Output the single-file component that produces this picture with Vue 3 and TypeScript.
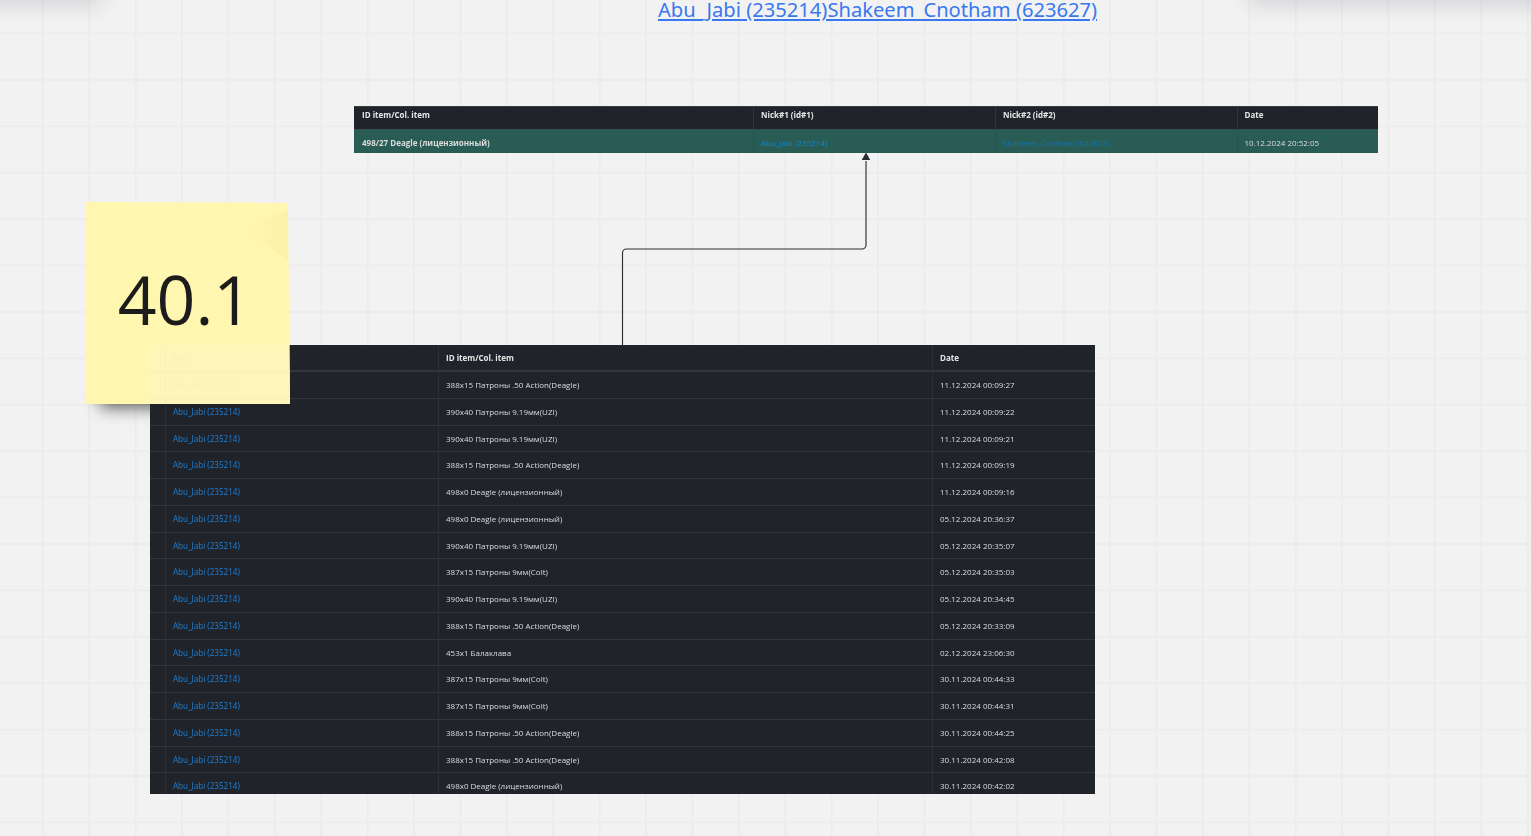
<script setup lang="ts">
interface LogRow {
  item: string
  date: string
}

const rows: LogRow[] = [
  { item: '388x15 Патроны .50 Action(Deagle)', date: '11.12.2024 00:09:27' },
  { item: '390x40 Патроны 9.19мм(UZI)', date: '11.12.2024 00:09:22' },
  { item: '390x40 Патроны 9.19мм(UZI)', date: '11.12.2024 00:09:21' },
  { item: '388x15 Патроны .50 Action(Deagle)', date: '11.12.2024 00:09:19' },
  { item: '498x0 Deagle (лицензионный)', date: '11.12.2024 00:09:16' },
  { item: '498x0 Deagle (лицензионный)', date: '05.12.2024 20:36:37' },
  { item: '390x40 Патроны 9.19мм(UZI)', date: '05.12.2024 20:35:07' },
  { item: '387x15 Патроны 9мм(Colt)', date: '05.12.2024 20:35:03' },
  { item: '390x40 Патроны 9.19мм(UZI)', date: '05.12.2024 20:34:45' },
  { item: '388x15 Патроны .50 Action(Deagle)', date: '05.12.2024 20:33:09' },
  { item: '453x1 Балаклава', date: '02.12.2024 23:06:30' },
  { item: '387x15 Патроны 9мм(Colt)', date: '30.11.2024 00:44:33' },
  { item: '387x15 Патроны 9мм(Colt)', date: '30.11.2024 00:44:31' },
  { item: '388x15 Патроны .50 Action(Deagle)', date: '30.11.2024 00:44:25' },
  { item: '388x15 Патроны .50 Action(Deagle)', date: '30.11.2024 00:42:08' },
  { item: '498x0 Deagle (лицензионный)', date: '30.11.2024 00:42:02' }
]
</script>

<template>
  <main class="canvas">
    <div class="edge-shadow edge-left"></div>
    <div class="edge-shadow edge-right"></div>

    <a class="title-link">Abu_Jabi (235214)Shakeem_Cnotham (623627)</a>

    <section class="shot shot-top">
      <div class="top-row top-head">
        <div class="cell">ID item/Col. item</div>
        <div class="cell">Nick#1 (id#1)</div>
        <div class="cell">Nick#2 (id#2)</div>
        <div class="cell">Date</div>
      </div>
      <div class="top-row top-body">
        <div class="cell strong">498/27 Deagle (лицензионный)</div>
        <div class="cell link">Abu_Jabi (235214)</div>
        <div class="cell link dim">Shakeem_Cnotham (623627)</div>
        <div class="cell">10.12.2024 20:52:05</div>
      </div>
    </section>

    <div class="sticky-shadow"></div>

    <section class="shot shot-bottom">
      <div class="log-row log-head">
        <div class="cell">Nick</div>
        <div class="cell">ID item/Col. item</div>
        <div class="cell">Date</div>
      </div>
      <div v-for="(row, i) in rows" :key="i" class="log-row">
        <div class="cell link">Abu_Jabi (235214)</div>
        <div class="cell">{{ row.item }}</div>
        <div class="cell">{{ row.date }}</div>
      </div>
    </section>

    <svg class="connector" width="260" height="194" viewBox="0 0 260 194" fill="none">
      <path d="M12.5 193V101a4 4 0 0 1 4-4H252a4 4 0 0 0 4-4V9" stroke="#2f2f33" stroke-width="1.15" />
      <path d="M256 0.5l4.3 7.5h-8.6z" fill="#2b2b30" />
    </svg>

    <div class="sticky">
      <div class="fold"></div>
      <div class="overlap">
        <span class="ghost ghost-head">Nick</span>
        <span class="ghost ghost-row">Abu_Jabi (235214)</span>
      </div>
      <span class="sticky-text">40.1</span>
    </div>
  </main>
</template>

<style>
html,
body {
  margin: 0;
  background: #f2f2f2;
}
</style>

<style scoped>
.canvas {
  position: relative;
  width: 1531px;
  height: 836px;
  overflow: hidden;
  background-color: #f2f2f2;
  background-image:
    linear-gradient(to right, #ececec 1.5px, transparent 1.5px),
    linear-gradient(to bottom, #ececec 1.5px, transparent 1.5px);
  background-size: 46.42px 46.42px;
  background-position: 41.8px 32.5px;
  font-family: "Open Sans", "Noto Sans", sans-serif;
}

.edge-shadow {
  position: absolute;
  top: -30px;
  height: 30px;
  background: #fff;
  box-shadow: 0 4px 22px rgba(40, 40, 70, 0.16);
}
.edge-left {
  left: -40px;
  width: 140px;
}
.edge-right {
  left: 1250px;
  width: 320px;
}

.title-link {
  position: absolute;
  left: 658px;
  top: -1px;
  font-family: "Noto Sans", "Open Sans", sans-serif;
  font-size: 20.15px;
  line-height: 20px;
  color: #3a78ee;
  text-decoration: underline;
  white-space: nowrap;
}

.shot {
  position: absolute;
  overflow: hidden;
  background: #21232b;
  color: #dcdcdc;
  font-size: 8px;
  filter: blur(0.35px);
}
.shot-top {
  left: 354px;
  top: 106px;
  width: 1024px;
  height: 47px;
}
.shot-bottom {
  left: 150px;
  top: 345px;
  width: 945px;
  height: 449px;
}

.top-row {
  display: grid;
  grid-template-columns: 399px 242px 241.5px 141.5px;
  box-sizing: border-box;
}
.top-head {
  height: 23px;
  font-weight: 700;
  color: #e6e6e6;
  border-top: 1px solid #3a3c42;
}
.top-body {
  height: 24px;
  background: #2a5c56;
  border-top: 1px solid #35504e;
}
.top-row .cell {
  display: flex;
  align-items: center;
  padding-left: 7px;
  border-left: 1px solid #31343b;
  white-space: nowrap;
}
.top-row .cell:first-child {
  padding-left: 8px;
  border-left: 0;
}
.top-head .cell {
  align-items: flex-start;
  padding-top: 2px;
}
.top-body .cell {
  padding-top: 2px;
  border-left-color: #2f4f4d;
}
.strong {
  font-weight: 700;
}

.log-row {
  display: grid;
  grid-template-columns: 288px 494px 163px;
  height: 26.75px;
  border-bottom: 1px solid #33353c;
  box-sizing: border-box;
}
.log-row .cell {
  display: flex;
  align-items: center;
  padding-left: 7px;
  padding-bottom: 0.5px;
  border-left: 1px solid #2d2f36;
  white-space: nowrap;
  box-sizing: border-box;
}
.log-row .cell:first-child {
  margin-left: 15px;
  padding-left: 7px;
  font-size: 8.1px;
}
.log-head {
  height: 27px;
  border-bottom-width: 2px;
  font-weight: 700;
  color: #e6e6e6;
}

.link {
  color: #1f80d4;
}
.top-body .link {
  color: #1085cf;
}
.top-body .dim {
  color: #1075b2;
}

.connector {
  position: absolute;
  left: 610px;
  top: 152px;
}

.sticky-shadow {
  position: absolute;
  left: 100px;
  top: 386px;
  width: 175px;
  height: 22px;
  background: rgba(0, 0, 0, 0.6);
  filter: blur(8px);
}
.sticky {
  position: absolute;
  left: 85px;
  top: 202px;
  width: 205px;
  height: 202px;
  display: flex;
  align-items: center;
  justify-content: center;
  background: #fff6b0;
  clip-path: polygon(1px 0, 203px 0.5px, 205px 202px, 0 202px);
}
.fold {
  position: absolute;
  left: 160px;
  top: 8px;
  width: 43px;
  height: 52px;
  background: linear-gradient(90deg, #fff6b0 5%, #fbf2a9 100%);
  clip-path: polygon(0 32%, 100% 0, 100% 100%);
}
.overlap {
  position: absolute;
  left: 65px;
  top: 143px;
  width: 140px;
  height: 59px;
  background-color: #fdf6b8;
  background-image:
    linear-gradient(to right, #f9f1b2 1px, transparent 1px),
    linear-gradient(to bottom, transparent 26px, #f9f1b2 26px, #f9f1b2 27px, transparent 27px),
    linear-gradient(to bottom, transparent 53px, #f9f1b2 53px, #f9f1b2 54px, transparent 54px);
  background-position: 15px 0, 0 0, 0 0;
  background-repeat: no-repeat;
}
.ghost {
  position: absolute;
  left: 22px;
  font-size: 8px;
  line-height: 10px;
  color: #fbf3b6;
  white-space: nowrap;
}
.ghost-head {
  top: 8px;
  font-weight: 700;
}
.ghost-row {
  top: 35px;
}
.sticky-text {
  position: relative;
  font-size: 68px;
  color: #1c1c1c;
  margin-left: -5px;
  margin-top: -9px;
}
</style>
